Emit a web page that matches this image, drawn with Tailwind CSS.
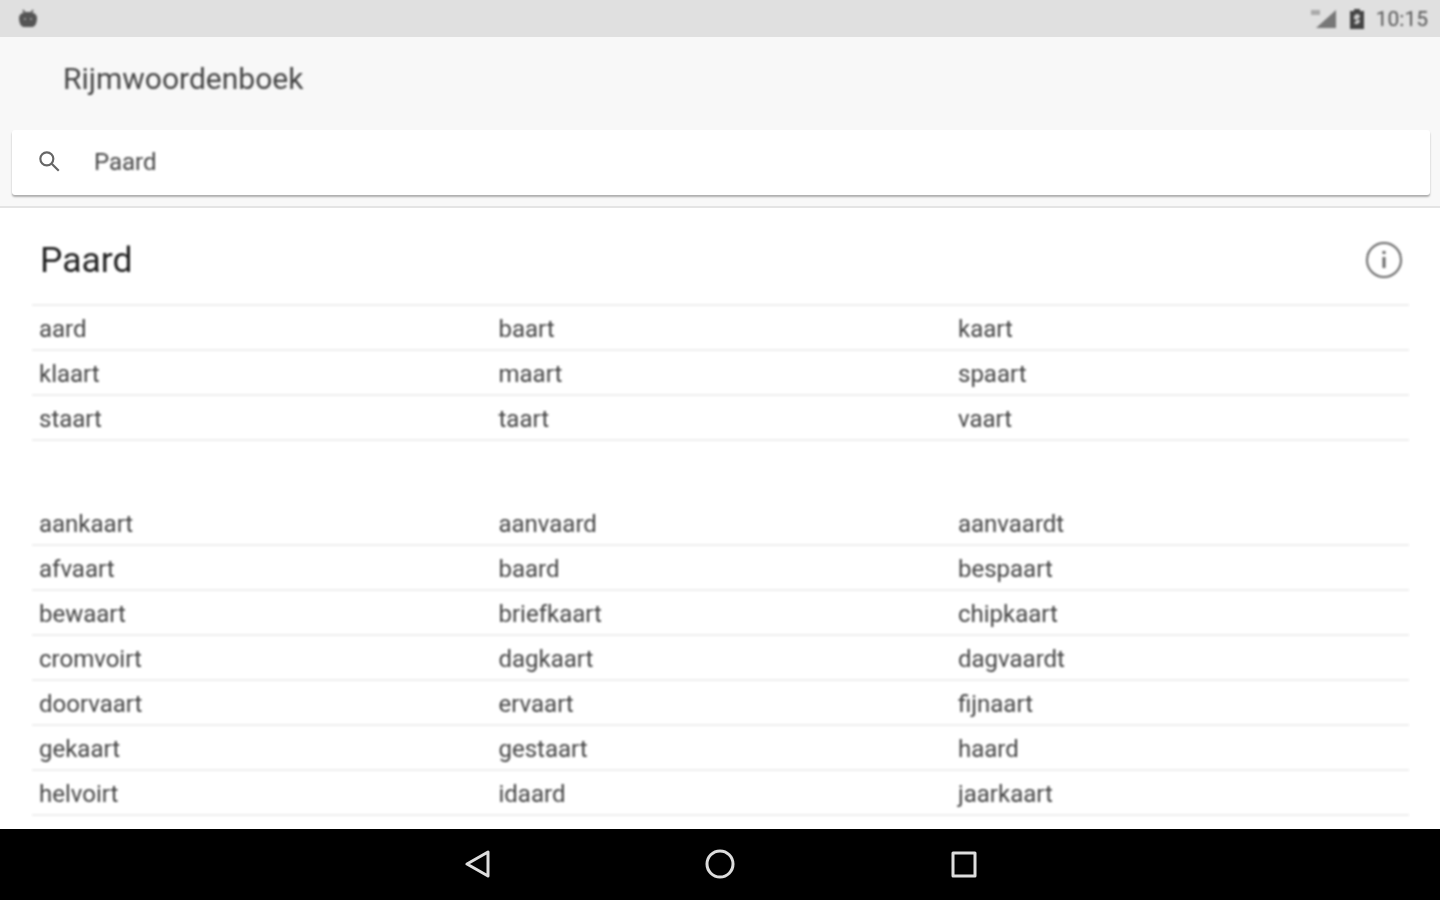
<!DOCTYPE html>
<html>
<head>
<meta charset="utf-8">
<script src="https://cdn.jsdelivr.net/npm/@tailwindcss/browser@4"></script>
</head>
<body class="m-0 h-[900px] w-[1440px] overflow-hidden bg-white font-['Roboto',sans-serif] text-[#444]">
<div class="flex h-[900px] flex-col">
  <div class="flex h-[37px] items-center justify-between bg-[#e0e0e0] pl-[18px] pr-[12px]">
    <svg class="blur-[0.8px]" width="20" height="22" viewBox="0 0 20 22"><path d="M5 2 L7 5 M15 2 L13 5" stroke="#555" stroke-width="1.500"/><path d="M1 10 C1 6 5 4 10 4 C15 4 19 6 19 10 C19 15 17 19 14 19 H6 C3 19 1 15 1 10Z" fill="#555"/><circle cx="7" cy="11" r="1" fill="#aaa"/><circle cx="13" cy="11" r="1" fill="#aaa"/></svg>
    <div class="flex items-center blur-[0.8px]">
      <svg width="30" height="24" viewBox="0 0 30 24"><path d="M27 3 V21 H7 Z" fill="#777"/><path d="M2 3 H11 V8 H2Z" fill="#aaa"/></svg>
      <svg class="ml-[10px]" width="16" height="22" viewBox="0 0 16 22"><path d="M5 1 H11 V3 H15 V21 H1 V3 H5Z" fill="#444"/><path d="M8 6 A3.500 3 0 0 1 11 9 L8 12 L11 12 A3.500 3.500 0 0 1 5 15 L8 12 L5 11 A3.500 4 0 0 1 8 6Z" fill="#ccc"/></svg>
      <span class="ml-[11px] pt-[2px] text-[21px] leading-none text-[#555]">10:15</span>
    </div>
  </div>
  <div class="flex h-[93px] items-center bg-[#f8f8f8] pb-[10px] pl-[63px] text-[30px] text-[#444]"><span class="blur-[0.8px]">Rijmwoordenboek</span></div>
  <div class="bg-[#f8f8f8] pb-[11px] pl-[12px] pr-[10px]">
    <div class="flex h-[65px] items-center rounded-[3px] bg-white pl-[24px] shadow-[0_2px_2px_rgba(0,0,0,0.3)]">
      <svg class="mb-[3px] blur-[0.6px]" width="26" height="26" viewBox="0 0 24 24" fill="none" stroke="#666" stroke-width="2"><circle cx="10" cy="10" r="6"/><path d="M14.500 14.500 L21 21"/></svg>
      <span class="mb-[2px] ml-[32px] text-[24px] text-[#444] blur-[0.8px]">Paard</span>
    </div>
  </div>
  <div class="h-[2px] bg-[#e4e4e4]"></div>
  <main class="flex-1 overflow-hidden bg-white pl-[32px] pr-[31px]">
    <div class="blur-[0.8px]">
    <div class="flex h-[96px] items-center justify-between pl-[8px] pr-[6px] pt-[8px]">
      <h1 class="pt-[2px] text-[35.500px] font-normal leading-none text-[#222]">Paard</h1>
      <svg width="38" height="38" viewBox="0 0 38 38" fill="none" stroke="#666" stroke-width="2"><circle cx="19" cy="19" r="17"/><path d="M19 16 V27" stroke-width="3"/><path d="M19 10 V13" stroke-width="3"/></svg>
    </div>
    <div class="grid grid-cols-[459.500px_459.500px_1fr] border-t-2 border-[#eee] text-[24px] text-[#444]">
      <div class="flex h-[45px] items-center border-b-2 border-[#eee] pl-[7px] pt-[3px]">aard</div><div class="flex h-[45px] items-center border-b-2 border-[#eee] pl-[7px] pt-[3px]">baart</div><div class="flex h-[45px] items-center border-b-2 border-[#eee] pl-[7px] pt-[3px]">kaart</div>
      <div class="flex h-[45px] items-center border-b-2 border-[#eee] pl-[7px] pt-[3px]">klaart</div><div class="flex h-[45px] items-center border-b-2 border-[#eee] pl-[7px] pt-[3px]">maart</div><div class="flex h-[45px] items-center border-b-2 border-[#eee] pl-[7px] pt-[3px]">spaart</div>
      <div class="flex h-[45px] items-center border-b-2 border-[#eee] pl-[7px] pt-[3px]">staart</div><div class="flex h-[45px] items-center border-b-2 border-[#eee] pl-[7px] pt-[3px]">taart</div><div class="flex h-[45px] items-center border-b-2 border-[#eee] pl-[7px] pt-[3px]">vaart</div>
    </div>
    <div class="mt-[60px] grid grid-cols-[459.500px_459.500px_1fr] text-[24px] text-[#444]">
      <div class="flex h-[45px] items-center border-b-2 border-[#eee] pl-[7px] pt-[3px]">aankaart</div><div class="flex h-[45px] items-center border-b-2 border-[#eee] pl-[7px] pt-[3px]">aanvaard</div><div class="flex h-[45px] items-center border-b-2 border-[#eee] pl-[7px] pt-[3px]">aanvaardt</div>
      <div class="flex h-[45px] items-center border-b-2 border-[#eee] pl-[7px] pt-[3px]">afvaart</div><div class="flex h-[45px] items-center border-b-2 border-[#eee] pl-[7px] pt-[3px]">baard</div><div class="flex h-[45px] items-center border-b-2 border-[#eee] pl-[7px] pt-[3px]">bespaart</div>
      <div class="flex h-[45px] items-center border-b-2 border-[#eee] pl-[7px] pt-[3px]">bewaart</div><div class="flex h-[45px] items-center border-b-2 border-[#eee] pl-[7px] pt-[3px]">briefkaart</div><div class="flex h-[45px] items-center border-b-2 border-[#eee] pl-[7px] pt-[3px]">chipkaart</div>
      <div class="flex h-[45px] items-center border-b-2 border-[#eee] pl-[7px] pt-[3px]">cromvoirt</div><div class="flex h-[45px] items-center border-b-2 border-[#eee] pl-[7px] pt-[3px]">dagkaart</div><div class="flex h-[45px] items-center border-b-2 border-[#eee] pl-[7px] pt-[3px]">dagvaardt</div>
      <div class="flex h-[45px] items-center border-b-2 border-[#eee] pl-[7px] pt-[3px]">doorvaart</div><div class="flex h-[45px] items-center border-b-2 border-[#eee] pl-[7px] pt-[3px]">ervaart</div><div class="flex h-[45px] items-center border-b-2 border-[#eee] pl-[7px] pt-[3px]">fijnaart</div>
      <div class="flex h-[45px] items-center border-b-2 border-[#eee] pl-[7px] pt-[3px]">gekaart</div><div class="flex h-[45px] items-center border-b-2 border-[#eee] pl-[7px] pt-[3px]">gestaart</div><div class="flex h-[45px] items-center border-b-2 border-[#eee] pl-[7px] pt-[3px]">haard</div>
      <div class="flex h-[45px] items-center border-b-2 border-[#eee] pl-[7px] pt-[3px]">helvoirt</div><div class="flex h-[45px] items-center border-b-2 border-[#eee] pl-[7px] pt-[3px]">idaard</div><div class="flex h-[45px] items-center border-b-2 border-[#eee] pl-[7px] pt-[3px]">jaarkaart</div>
    </div>
    </div>
  </main>
  <nav class="relative h-[71px] bg-black">
    <svg class="absolute left-[463px] top-[20px] blur-[0.6px]" width="30" height="30" viewBox="0 0 30 30" fill="none" stroke="#ddd" stroke-width="3" stroke-linejoin="round"><path d="M25 3 V27 L4 15 Z"/></svg>
    <svg class="absolute left-[705px] top-[20px] blur-[0.6px]" width="30" height="30" viewBox="0 0 30 30" fill="none" stroke="#ddd" stroke-width="3"><circle cx="15" cy="15" r="13"/></svg>
    <svg class="absolute left-[950px] top-[21px] blur-[0.6px]" width="28" height="28" viewBox="0 0 28 28" fill="none" stroke="#ddd" stroke-width="3" stroke-linejoin="round"><rect x="3" y="3" width="22" height="23"/></svg>
  </nav>
</div>
</body>
</html>
